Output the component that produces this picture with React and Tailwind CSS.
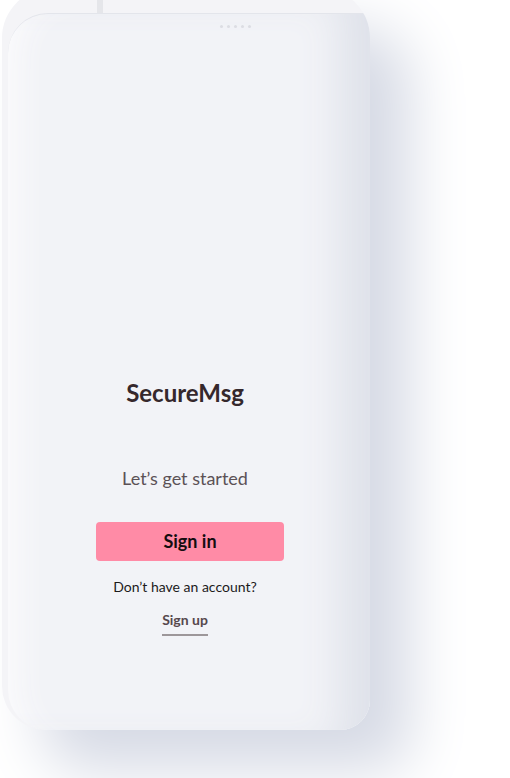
import React from 'react';

const FONT = { fontFamily: 'Lato, "Noto Sans", sans-serif' };

function Dots() {
  return (
    <div className="flex gap-[4px] pt-[11px] pl-[212px]">
      {[0, 1, 2, 3, 4].map(i => (
        <span key={i} className="block w-[3px] h-[3px] rounded-full bg-[#dcdde3]" />
      ))}
    </div>
  );
}

export default function App() {
  return (
    <div className="w-[510px] h-[778px] bg-white overflow-hidden" style={FONT}>
      {/* Phone frame */}
      <div className="relative ml-[2px] -mt-[12px] w-[368px] h-[742px] rounded-tl-[50px] rounded-tr-[50px] rounded-bl-[44px] rounded-br-[30px] bg-[#f4f4f7] shadow-[40px_40px_60px_#d6dae5] flex flex-col overflow-hidden">
        {/* side button */}
        <div className="absolute left-[95px] top-0 w-[6px] h-[25px] bg-[#e5e6ea]" />

        {/* Screen */}
        <div className="mt-[25px] ml-[6px] flex-1 rounded-tl-[40px] rounded-bl-[40px] bg-[#f2f3f7] border-t border-[#e3e5eb] shadow-[inset_-50px_0_40px_-20px_#dfe2ea,inset_30px_0_30px_-20px_#fbfbfc] flex flex-col">
          <Dots />

          <div className="flex flex-col items-center mt-[350px] pr-[8px]">
            <h1 className="text-[24px] leading-[30px] font-bold text-[#35282c]">SecureMsg</h1>

            <p className="mt-[58px] text-[18px] leading-[24px] text-[#5b5156]">Let’s get started</p>

            <button className="mt-[32px] ml-[10px] w-[188px] h-[39px] rounded-[4px] bg-[#ff8ba6] text-[18px] font-bold text-[#150d10]">
              Sign in
            </button>

            <p className="mt-[16px] text-[14px] leading-[20px] text-[#1c1a1b]">Don’t have an account?</p>

            <a className="mt-[13px] pb-[4px] border-b-2 border-[#9d979a] text-[14px] leading-[20px] font-bold text-[#56484d]">
              Sign up
            </a>
          </div>
        </div>
      </div>
    </div>
  );
}
